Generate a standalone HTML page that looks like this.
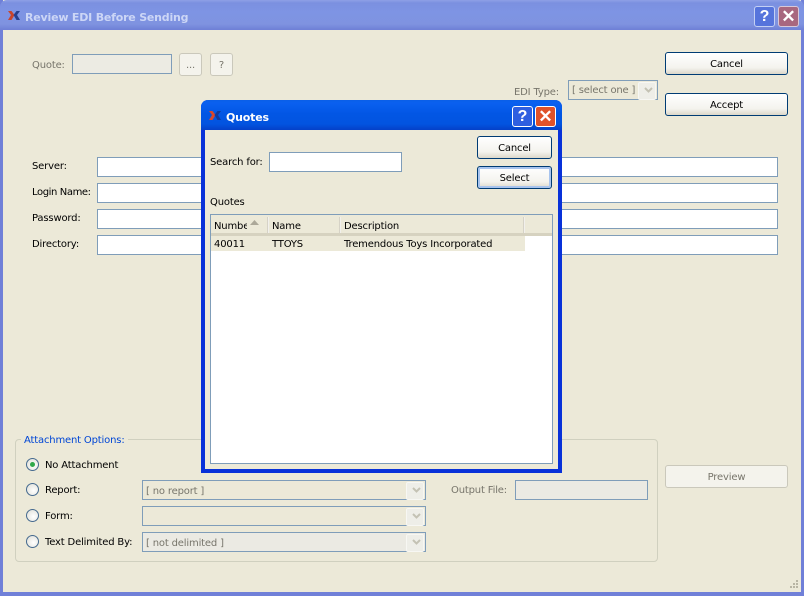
<!DOCTYPE html>
<html><head><meta charset="utf-8"><style>
html,body{margin:0;padding:0;width:804px;height:596px;overflow:hidden;background:#ece9d8}
*{box-sizing:border-box}
body{font:10px "DejaVu Sans","Liberation Sans",sans-serif;letter-spacing:-.17px;color:#000;position:relative}
.a{position:absolute;white-space:nowrap}
.t{position:absolute;white-space:nowrap;line-height:14px;height:14px;margin-top:2px}
.d{color:#77756b}
.i{position:absolute;background:#fff;border:1px solid #7f9db9}
.x{background:#ebeae3}
.b{position:absolute;border:1px solid #003c74;border-radius:3px;background:linear-gradient(#fff,#f4f3ee 70%,#dcd8ca);text-align:center;line-height:24px}
.bd{position:absolute;border:1px solid #cac8bb;border-radius:3px;background:#f4f3ec;color:#77756b;text-align:center}
.c{position:absolute;border:1px solid #7f9db9;background:#ece9d8;color:#77756b;padding-left:3px;height:22px}
.c:after{content:"";position:absolute;right:1px;top:1px;width:16px;height:16px;background:#eeeee8;border:1px solid #f7f7f3;border-radius:2px}
.ch{position:absolute;z-index:2;right:3px;top:5px}
.r{position:absolute;width:13px;height:13px;border-radius:50%;border:1px solid #456a8f;background:radial-gradient(circle at 60% 60%,#fff,#dcdcd4)}
.tb{position:absolute;width:21px;height:21px;border:1px solid #fff;border-radius:3px;color:#fff;font:bold 16px "Liberation Sans",sans-serif;letter-spacing:0;text-align:center;line-height:19px}
</style></head><body>
<!-- main window -->
<div class="a" style="left:0;top:0;width:804px;height:596px;background:#ece9d8;border:solid #7080d8;border-width:0 3px 4px 3px"></div>
<div class="a" style="left:0;top:0;width:804px;height:30px;border-radius:7px 7px 0 0;background:linear-gradient(#8ea0e6 0,#7b90e0 3px,#7e94e4 12px,#7f93e0 24px,#6e7fd6 30px)"></div>
<svg class="a" style="left:8px;top:11px" width="12" height="9" viewBox="0 0 12 9"><path d="M0 0h3.500l3 4-3 5H0l3-5z" fill="#c8452c"/><path d="M12 0H8.500l-3 4 3 5H12L9 4z" fill="#27408f"/></svg>
<div class="t" style="left:25px;top:8px;color:#ccd6f6;font:bold 11px/15px 'DejaVu Sans',sans-serif;letter-spacing:-.2px">Review EDI Before Sending</div>
<div class="tb" style="left:754px;top:6px;background:#5674dc;border-color:#c4d0f4">?</div>
<div class="tb" style="left:778px;top:6px;background:#a8677f;border-color:#d8c8d8;font-size:17px">✕</div>

<div class="t d" style="left:32px;top:57px">Quote:</div>
<div class="i x" style="left:72px;top:54px;width:100px;height:20px;background:#ecebe3"></div>
<div class="bd" style="left:179px;top:53px;width:23px;height:23px;line-height:23px">...</div>
<div class="bd" style="left:210px;top:53px;width:23px;height:23px;line-height:23px">?</div>
<div class="b" style="left:665px;top:52px;width:123px;height:23px">Cancel</div>
<div class="b" style="left:665px;top:93px;width:123px;height:23px">Accept</div>
<div class="t d" style="left:514px;top:84px">EDI Type:</div>
<div class="c" style="left:568px;top:80px;width:90px;height:20px;line-height:19px">[ select one ]<svg class="ch" style="right:3px;top:4px" width="11" height="10"><path d="M2 3l3.500 3.500L9 3" fill="none" stroke="#c4c2b4" stroke-width="2"/></svg></div>

<div class="t" style="left:32px;top:158px">Server:</div>
<div class="t" style="left:32px;top:184px;letter-spacing:-.4px">Login Name:</div>
<div class="t" style="left:32px;top:210px">Password:</div>
<div class="t" style="left:32px;top:236px">Directory:</div>
<div class="i" style="left:97px;top:157px;width:681px;height:20px"></div>
<div class="i" style="left:97px;top:183px;width:681px;height:20px"></div>
<div class="i" style="left:97px;top:209px;width:681px;height:20px"></div>
<div class="i" style="left:97px;top:235px;width:681px;height:20px"></div>

<!-- attachment group -->
<div class="a" style="left:15px;top:439px;width:643px;height:123px;border:1px solid #d0d0bf;border-radius:4px"></div>
<div class="t" style="left:21px;top:432px;background:#ece9d8;padding:0 3px;color:#0046d5">Attachment Options:</div>
<div class="r" style="left:26px;top:458px"><div class="a" style="left:3px;top:3px;width:5px;height:5px;border-radius:50%;background:#2fa84a"></div></div>
<div class="r" style="left:26px;top:483px"></div>
<div class="r" style="left:26px;top:509px"></div>
<div class="r" style="left:26px;top:535px"></div>
<div class="t" style="left:45px;top:457px">No Attachment</div>
<div class="t" style="left:45px;top:482px">Report:</div>
<div class="t" style="left:45px;top:508px">Form:</div>
<div class="t" style="left:45px;top:534px">Text Delimited By:</div>
<div class="c" style="left:142px;top:480px;width:284px;height:20px;line-height:21px">[ no report ]<svg class="ch" style="top:4px" width="11" height="10"><path d="M2 3l3.500 3.500L9 3" fill="none" stroke="#c4c2b4" stroke-width="2"/></svg></div>
<div class="c" style="left:142px;top:506px;width:284px;height:20px"><svg class="ch" style="top:4px" width="11" height="10"><path d="M2 3l3.500 3.500L9 3" fill="none" stroke="#c4c2b4" stroke-width="2"/></svg></div>
<div class="c" style="left:142px;top:532px;width:284px;height:20px;line-height:21px;background:#ebeae3">[ not delimited ]<svg class="ch" style="top:4px" width="11" height="10"><path d="M2 3l3.500 3.500L9 3" fill="none" stroke="#c4c2b4" stroke-width="2"/></svg></div>
<div class="t d" style="left:451px;top:482px">Output File:</div>
<div class="i" style="left:515px;top:480px;width:133px;height:20px;background:#ebeae3"></div>
<div class="bd" style="left:665px;top:465px;width:123px;height:23px;line-height:24px">Preview</div>
<svg class="a" style="left:787px;top:579px" width="14" height="13"><g fill="#b8b5a4"><rect x="9" y="1" width="2" height="2"/><rect x="6" y="4" width="2" height="2"/><rect x="9" y="4" width="2" height="2"/><rect x="3" y="7" width="2" height="2"/><rect x="6" y="7" width="2" height="2"/><rect x="9" y="7" width="2" height="2"/></g></svg>

<!-- dialog -->
<div class="a" style="left:201px;top:100px;width:361px;height:373px;background:#ece9d8;border:solid #0831d9;border-width:0 4px 4px 4px;border-radius:7px 7px 0 0"></div>
<div class="a" style="left:201px;top:100px;width:361px;height:30px;border-radius:7px 7px 0 0;background:linear-gradient(#0a5fe8 0,#0a60f0 3px,#0256e4 14px,#0254e0 24px,#0440c8 30px)"></div>
<svg class="a" style="left:209px;top:111px" width="12" height="9" viewBox="0 0 12 9"><path d="M0 0h3.500l3 4-3 5H0l3-5z" fill="#d8482c"/><path d="M12 0H8.500l-3 4 3 5H12L9 4z" fill="#123a9a"/></svg>
<div class="t" style="left:226px;top:108px;color:#fff;font:bold 11px/15px 'DejaVu Sans',sans-serif;letter-spacing:-.2px">Quotes</div>
<div class="tb" style="left:512px;top:106px;background:#2f5fe0">?</div>
<div class="tb" style="left:535px;top:106px;background:#e0522a;font-size:17px">✕</div>

<div class="t" style="left:210px;top:154px">Search for:</div>
<div class="i" style="left:269px;top:152px;width:133px;height:20px"></div>
<div class="b" style="left:477px;top:136px;width:75px;height:23px">Cancel</div>
<div class="b" style="left:477px;top:166px;width:75px;height:23px;box-shadow:inset 0 0 0 2px #a8c4ee">Select</div>
<div class="t" style="left:210px;top:194px">Quotes</div>
<div class="i" style="left:210px;top:214px;width:343px;height:250px"></div>
<div class="a" style="left:211px;top:215px;width:341px;height:21px;background:#ece9d8;border-bottom:3px solid #d6d2c0"></div>
<div class="a" style="left:267px;top:217px;width:2px;height:16px;background:linear-gradient(90deg,#c8c4b4,#fff)"></div>
<div class="a" style="left:339px;top:217px;width:2px;height:16px;background:linear-gradient(90deg,#c8c4b4,#fff)"></div>
<div class="a" style="left:523px;top:217px;width:2px;height:16px;background:linear-gradient(90deg,#c8c4b4,#fff)"></div>
<div class="t" style="left:214px;top:218px;width:33px;overflow:hidden">Number</div>
<svg class="a" style="left:249px;top:219px" width="12" height="7"><path d="M1 6L5.500 1 10 6z" fill="#aca899"/></svg>
<div class="t" style="left:272px;top:218px">Name</div>
<div class="t" style="left:344px;top:218px">Description</div>
<div class="a" style="left:211px;top:236px;width:314px;height:15px;background:#ece9d8"></div>
<div class="t" style="left:214px;top:236px">40011</div>
<div class="t" style="left:272px;top:236px">TTOYS</div>
<div class="t" style="left:344px;top:236px">Tremendous Toys Incorporated</div>
</body></html>
